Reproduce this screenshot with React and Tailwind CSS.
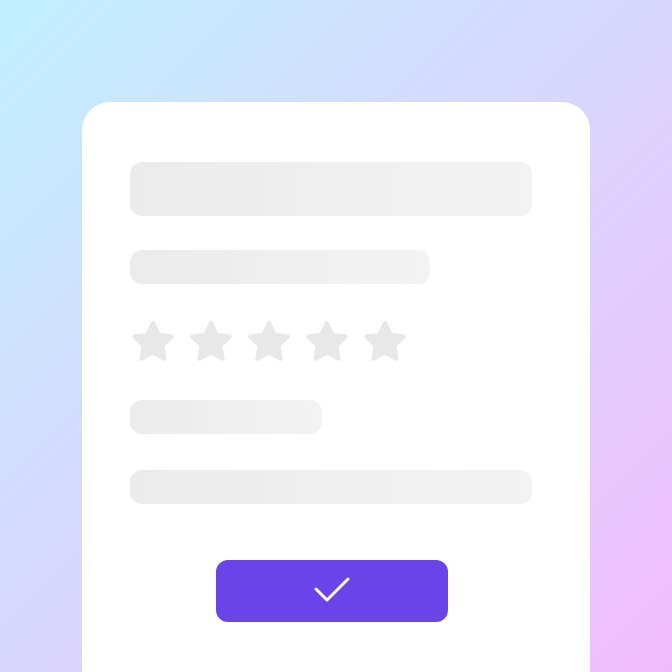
function Star() {
  return (
    <svg width="48" height="48" viewBox="0 0 24 24" className="shrink-0">
      <path
        d="M12 2.5l2.9 5.9 6.5.9-4.7 4.6 1.1 6.5L12 17.3l-5.8 3.1 1.1-6.5-4.7-4.6 6.5-.9z"
        fill="#e8e8e8"
        stroke="#e8e8e8"
        strokeWidth="2"
        strokeLinejoin="round"
      />
    </svg>
  );
}

function Bar({ className }) {
  return <div className={`rounded-[12px] bg-gradient-to-r from-[#ebebeb] to-[#f3f3f3] ${className}`} />;
}

export default function App() {
  return (
    <div className="w-[672px] h-[672px] overflow-hidden bg-gradient-to-br from-[#c0f0ff] via-[#d8d6fc] to-[#f2bcfc] pt-[102px] pl-[82px]">
      <div className="w-[508px] h-[600px] bg-white rounded-[28px] px-[48px] pt-[60px] flex flex-col">
        <Bar className="w-[402px] h-[54px]" />
        <Bar className="w-[300px] h-[34px] mt-[34px]" />
        <div className="flex gap-[10px] mt-[34px] -ml-[1px]">
          <Star />
          <Star />
          <Star />
          <Star />
          <Star />
        </div>
        <Bar className="w-[192px] h-[34px] mt-[34px]" />
        <Bar className="w-[402px] h-[34px] mt-[36px]" />
        <button className="mt-[56px] ml-[86px] w-[232px] h-[62px] rounded-[12px] bg-[#6a43e9] flex items-center justify-center">
          <svg width="36" height="28" viewBox="0 0 36 28">
            <path d="M2 12l11 11 21-21" fill="none" stroke="white" strokeWidth="3" strokeLinecap="round" strokeLinejoin="round" />
          </svg>
        </button>
      </div>
    </div>
  );
}
